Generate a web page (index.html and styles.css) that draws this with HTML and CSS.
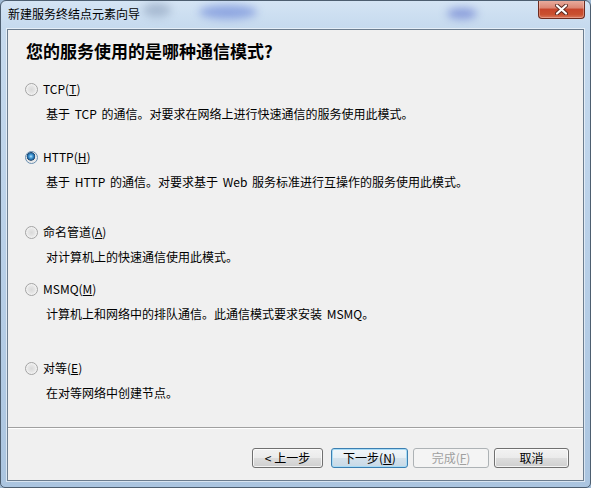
FILE: index.html
```html
<!DOCTYPE html>
<html lang="zh-CN">
<head>
<meta charset="utf-8">
<title>新建服务终结点元素向导</title>
<link rel="stylesheet" href="styles.css">
</head>
<body>
<div class="window">
  <div class="titlebar">
    <span class="blob blob-a"></span>
    <span class="blob blob-b"></span>
    <span class="blob blob-c"></span>
    <span class="title">新建服务终结点元素向导</span>
    <button class="close" aria-label="关闭">
      <svg width="13" height="11" viewBox="0 0 13 11">
        <path d="M2 1.5 L11 9.5 M11 1.5 L2 9.5" stroke="#5a2a22" stroke-width="4" stroke-linecap="round" fill="none"/>
        <path d="M2 1.5 L11 9.5 M11 1.5 L2 9.5" stroke="#ffffff" stroke-width="2.2" stroke-linecap="round" fill="none"/>
      </svg>
    </button>
  </div>
  <div class="client">
    <div class="content">
      <h1 class="heading">您的服务使用的是哪种通信模式?</h1>
      <div class="opt gap-1">
        <div class="opt-row"><span class="radio"></span><span class="label">TCP(<u>T</u>)</span></div>
        <div class="desc">基于 TCP 的通信。对要求在网络上进行快速通信的服务使用此模式。</div>
      </div>
      <div class="opt gap-2">
        <div class="opt-row"><span class="radio checked"></span><span class="label">HTTP(<u>H</u>)</span></div>
        <div class="desc">基于 HTTP 的通信。对要求基于 Web 服务标准进行互操作的服务使用此模式。</div>
      </div>
      <div class="opt gap-3">
        <div class="opt-row"><span class="radio"></span><span class="label">命名管道(<u>A</u>)</span></div>
        <div class="desc">对计算机上的快速通信使用此模式。</div>
      </div>
      <div class="opt gap-4">
        <div class="opt-row"><span class="radio"></span><span class="label">MSMQ(<u>M</u>)</span></div>
        <div class="desc">计算机上和网络中的排队通信。此通信模式要求安装 MSMQ。</div>
      </div>
      <div class="opt gap-5">
        <div class="opt-row"><span class="radio"></span><span class="label">对等(<u>E</u>)</span></div>
        <div class="desc">在对等网络中创建节点。</div>
      </div>
    </div>
    <div class="footer">
      <button class="btn btn-back">&lt; 上一步</button>
      <button class="btn btn-next btn-default">下一步(<u>N</u>)</button>
      <button class="btn btn-finish" disabled>完成(<u>F</u>)</button>
      <button class="btn btn-cancel">取消</button>
    </div>
  </div>
</div>
</body>
</html>
```

FILE: styles.css
```css
html, body {
  margin: 0;
  padding: 0;
}
body {
  width: 591px;
  height: 488px;
  overflow: hidden;
  background: #9fb9d3;
  font-family: "Noto Sans CJK SC", "Liberation Sans", sans-serif;
  font-size: 12px;
  color: #000;
}
.window {
  box-sizing: border-box;
  width: 591px;
  height: 488px;
  display: flex;
  flex-direction: column;
  border: 1px solid #4d5e70;
  border-radius: 6px 6px 5px 5px;
  background: linear-gradient(180deg, #d4e4f4 0, #c6daee 26px, #b9d0e8 50%, #abc5e0 100%);
  overflow: hidden;
}
.titlebar {
  position: relative;
  height: 28px;
  flex: none;
  display: flex;
  align-items: flex-start;
}
.blob {
  position: absolute;
  border-radius: 50%;
  filter: blur(4px);
}
.blob-a {
  left: 142px;
  top: 2px;
  width: 28px;
  height: 14px;
  background: rgba(120, 140, 170, 0.45);
}
.blob-b {
  left: 198px;
  top: 4px;
  width: 58px;
  height: 14px;
  background: rgba(80, 110, 210, 0.5);
}
.blob-c {
  left: 446px;
  top: 7px;
  width: 30px;
  height: 11px;
  background: rgba(80, 100, 200, 0.55);
}
.title {
  position: relative;
  padding: 5px 0 0 7px;
  line-height: 16px;
  font-size: 12px;
  color: #000;
}
.close {
  position: relative;
  margin: -1px 5px 0 auto;
  width: 47px;
  height: 19px;
  box-sizing: border-box;
  border: 1px solid #6e2b1f;
  border-top: none;
  border-radius: 0 0 4px 4px;
  padding: 0;
  display: flex;
  align-items: center;
  justify-content: center;
  background: linear-gradient(180deg, #eab0a2 0, #dc8572 45%, #c7452c 50%, #c9502f 80%, #d9775c 100%);
  box-shadow: inset 0 0 0 1px rgba(255, 220, 210, 0.35);
}
.client {
  flex: 1;
  margin: 0 6px 6px 6px;
  box-sizing: border-box;
  border: 1px solid #6c7d8f;
  box-shadow: 0 0 0 1px rgba(255, 255, 255, 0.55);
  background: #f0f0f0;
  display: flex;
  flex-direction: column;
}
.content {
  flex: 1;
  padding: 11px 0 0 17px;
}
.heading {
  margin: 0 0 0 1px;
  font-size: 17px;
  line-height: 20px;
  font-weight: 700;
}
.opt-row {
  display: flex;
  align-items: center;
  height: 16px;
  gap: 5px;
}
.label {
  line-height: 16px;
}
.desc {
  margin-top: 9px;
  padding-left: 21px;
  line-height: 16px;
  word-spacing: 2px;
}
.gap-1 { margin-top: 20px; }
.gap-2 { margin-top: 27px; }
.gap-3 { margin-top: 34px; }
.gap-4 { margin-top: 16px; }
.gap-5 { margin-top: 38px; }
.radio {
  flex: none;
  width: 13px;
  height: 13px;
  box-sizing: border-box;
  border-radius: 50%;
  border: 1px solid #a3a3a3;
  background: radial-gradient(circle at 50% 50%, #d9d9d9 0, #e6e6e6 45%, #f6f6f6 75%, #ffffff 100%);
}
.radio.checked {
  border-color: #6a8fb0;
  background: radial-gradient(circle at 45% 40%, #bfe8fd 0, #4fa6e0 1.5px, #1e5f98 3.5px, #23486c 4px, #e6e6e6 4.6px, #f4f4f4 100%);
}
.footer {
  flex: none;
  border-top: 1px solid #a0a0a0;
  box-shadow: inset 0 1px 0 #ffffff;
  padding: 20px 14px 12px 0;
  display: flex;
  justify-content: flex-end;
}
.btn {
  height: 20px;
  box-sizing: border-box;
  padding: 0;
  border: 1px solid #707070;
  border-radius: 3px;
  background: linear-gradient(180deg, #f2f2f2 0, #ebebeb 48%, #dddddd 52%, #cfcfcf 100%);
  box-shadow: inset 0 0 0 1px rgba(255, 255, 255, 0.75);
  font-family: "Noto Sans CJK SC", "Liberation Sans", sans-serif;
  font-size: 12px;
  line-height: 16px;
  color: #000;
}
.btn-back { width: 71px; }
.btn-next { width: 77px; margin-left: 8px; }
.btn-finish { width: 76px; margin-left: 5px; }
.btn-cancel { width: 75px; margin-left: 5px; }
.btn-default {
  border-color: #3c7fb1;
  box-shadow: inset 0 0 0 1px #a8dcf6;
  background: linear-gradient(180deg, #f0f6fa 0, #e6eff5 48%, #d4e2ec 52%, #c8d9e6 100%);
}
.btn-finish {
  border-color: #adb2b5;
  background: #f4f4f4;
  box-shadow: none;
  color: #a0a0a0;
}
```
